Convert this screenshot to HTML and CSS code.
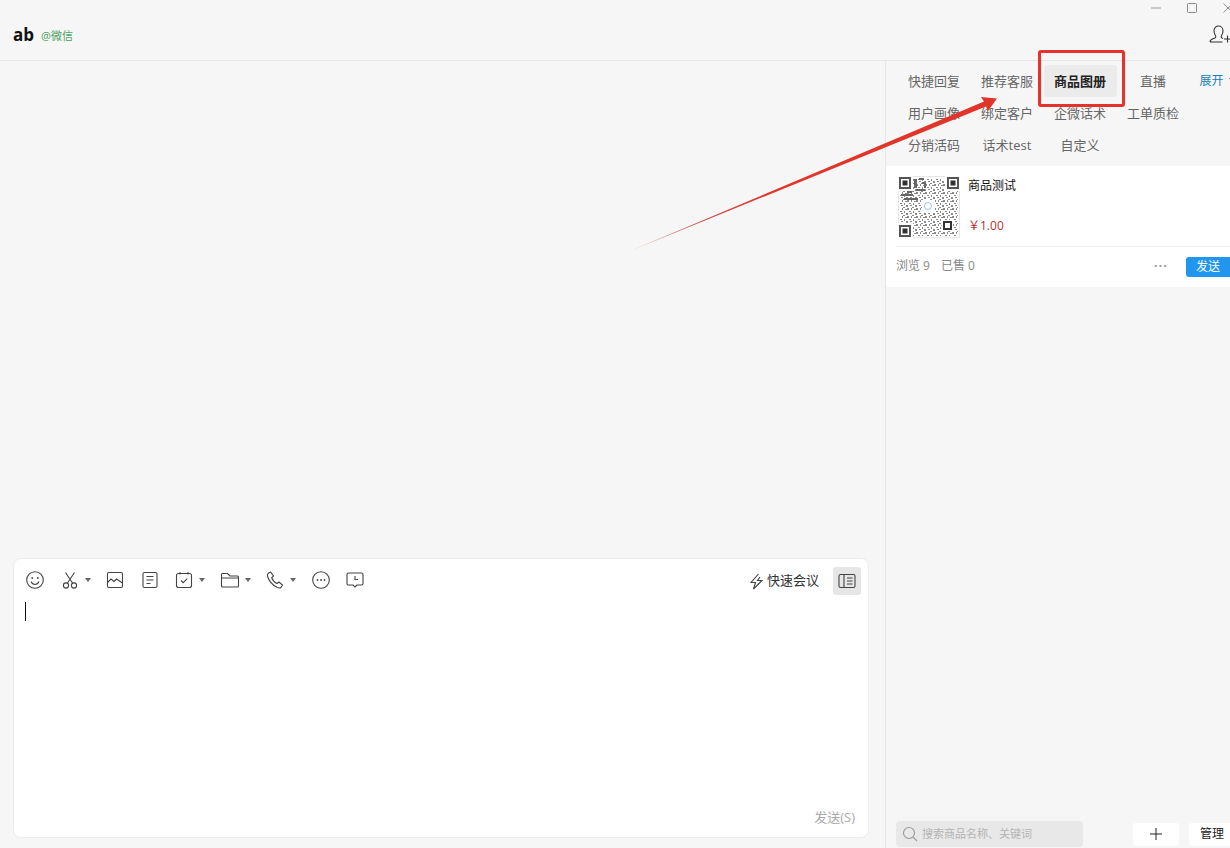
FILE: index.html
```html
<!DOCTYPE html>
<html lang="zh-CN">
<head>
    <meta charset="UTF-8">
    <meta name="viewport" content="width=device-width, initial-scale=1.0">
    <title>商品图册</title>
    <link rel="stylesheet" href="styles.css">
</head>
<body>
    <div class="app">
        <header class="top-bar">
            <div class="contact">
                <span class="contact-name">ab</span>
                <span class="contact-source">@微信</span>
            </div>
            <div class="top-right">
                <div class="window-controls">
                    <span class="win-btn"><svg width="12" height="12" viewBox="0 0 12 12"><path d="M1 6h10" stroke="#999" fill="none"/></svg></span>
                    <span class="win-btn"><svg width="12" height="12" viewBox="0 0 12 12"><rect x="1.5" y="1.5" width="9" height="9" rx="1" stroke="#888" fill="none"/></svg></span>
                    <span class="win-btn"><svg width="12" height="12" viewBox="0 0 12 12"><path d="M1.5 1.5l9 9M10.5 1.5l-9 9" stroke="#888" fill="none"/></svg></span>
                </div>
                <svg class="add-contact" width="22" height="20" viewBox="0 0 22 20"><path d="M1 17c0-2.500 3-3 5-4 1-.6 1-2 .2-3C5.200 9 5 7 5 5.500 5 3 7 1 9.500 1S14 3 14 5.500c0 1.500-.2 3.500-1.200 4.500-.8 1-.8 2.400.2 3l1 .5M1 17h12.500M15 14h7M18.500 10.500v7" stroke="#333" stroke-width="1.100" fill="none"/></svg>
            </div>
        </header>

        <div class="content">
            <main class="chat">
                <div class="messages"></div>
                <section class="editor">
                    <div class="toolbar">
                        <div class="tools">
                            <span class="tool"><svg width="20" height="20" viewBox="0 0 20 20" class="icon"><circle cx="10" cy="10" r="8.300"/><circle cx="7.200" cy="8" r=".9" class="solid"/><circle cx="12.800" cy="8" r=".9" class="solid"/><path d="M6 11.500c1 2.200 2.500 3 4 3s3-.8 4-3"/></svg></span>
                            <span class="tool"><svg width="20" height="20" viewBox="0 0 20 20" class="icon"><circle cx="6" cy="15.500" r="2.600"/><circle cx="14" cy="15.500" r="2.600"/><path d="M7.300 13.200L14.500 2.500M12.700 13.200L5.500 2.500"/></svg><i class="caret"></i></span>
                            <span class="tool"><svg width="20" height="20" viewBox="0 0 20 20" class="icon"><rect x="2.500" y="2.500" width="15" height="15" rx="1.500"/><path d="M2.500 12.500l3.500-3.500 3 2.500 2.500-2.500 6 4"/></svg></span>
                            <span class="tool"><svg width="20" height="20" viewBox="0 0 20 20" class="icon"><rect x="3" y="2.500" width="14" height="15" rx="1.500"/><path d="M6.500 6.500h7M6.500 10h7M6.500 13.500h4"/></svg></span>
                            <span class="tool"><svg width="20" height="20" viewBox="0 0 20 20" class="icon"><rect x="2.500" y="3.500" width="15" height="14" rx="2"/><path d="M6 2v2.500M14 2v2.500M7 10.500l2.200 2.200 4-4"/></svg><i class="caret"></i></span>
                            <span class="tool"><svg width="20" height="20" viewBox="0 0 20 20" class="icon"><path d="M1.500 6V4.500C1.500 4 1.900 3.500 2.500 3.500h5L10 6h7.500c.6 0 1 .4 1 1v9c0 .6-.4 1-1 1h-15c-.6 0-1-.4-1-1zM1.500 8h17"/></svg><i class="caret"></i></span>
                            <span class="tool"><svg width="20" height="20" viewBox="0 0 20 20" class="icon"><path d="M3 3.500L5.500 2l3 4-1.800 1.700c.8 2.300 2.800 4.600 5.300 5.800L14 12l3.500 3-1.500 2.500c-1 .8-2.500.5-4-.2C7.500 15 4 11 2.600 6.500 2.300 5.300 2.400 4.200 3 3.500z"/></svg><i class="caret"></i></span>
                            <span class="tool"><svg width="20" height="20" viewBox="0 0 20 20" class="icon"><circle cx="10" cy="10" r="8.300"/><circle cx="6.500" cy="10" r=".9" class="solid"/><circle cx="10" cy="10" r=".9" class="solid"/><circle cx="13.500" cy="10" r=".9" class="solid"/></svg></span>
                            <span class="tool"><svg width="20" height="20" viewBox="0 0 20 20" class="icon"><path d="M3.500 3h13c.8 0 1.500.7 1.500 1.500v9c0 .8-.7 1.500-1.500 1.500h-4.500L10 17l-2-2H3.500C2.700 15 2 14.300 2 13.500v-9C2 3.700 2.700 3 3.500 3zM10 6v3.500h3"/></svg></span>
                        </div>
                        <div class="toolbar-right">
                            <span class="quick-meeting">
                                <svg width="15" height="17" viewBox="0 0 15 17" class="icon"><path d="M9.500 1L2 9.500h4.500L4.500 16l8.500-8.500H8.500L11 4"/></svg>
                                <span class="quick-label">快速会议</span>
                            </span>
                            <span class="panel-toggle"><svg width="18" height="16" viewBox="0 0 18 16" class="icon"><rect x="1" y="1.500" width="16" height="13" rx="1.500"/><path d="M6 1.500v13M9 5h5.500M9 8h5.500M9 11h5.500"/></svg></span>
                        </div>
                    </div>
                    <div class="input-area"><span class="text-cursor"></span></div>
                    <div class="editor-footer">发送(S)</div>
                </section>
            </main>

            <aside class="side">
                <nav class="tabs">
                    <a class="tab">快捷回复</a>
                    <a class="tab">推荐客服</a>
                    <a class="tab active">商品图册</a>
                    <a class="tab">直播</a>
                    <a class="tab expand">展开<svg class="expand-mark" width="8" height="6" viewBox="0 0 8 6"><path d="M1 1l3 3 3-3" stroke="#1a7fb5" fill="none"/></svg></a>
                    <a class="tab">用户画像</a>
                    <a class="tab">绑定客户</a>
                    <a class="tab">企微话术</a>
                    <a class="tab">工单质检</a>
                    <span></span>
                    <a class="tab">分销活码</a>
                    <a class="tab">话术test</a>
                    <a class="tab">自定义</a>
                </nav>

                <div class="product-card">
                    <div class="product-main">
                        <svg class="qr" width="62" height="62" viewBox="0 0 62 62">
                            <defs>
                                <pattern id="qrDots" width="9" height="8" patternUnits="userSpaceOnUse">
                                    <path d="M0 0h2v2H0zM4 0h1v2H4zM7 1h2v1H7zM2 3h2v1H2zM6 3h1v2H6zM0 5h1v2H0zM3 5h2v1H3zM8 5h1v2H8zM5 7h2v1H5z" fill="#8a8a8a"/>
                                </pattern>
                            </defs>
                            <rect x=".5" y=".5" width="61" height="61" fill="#fff" stroke="#e6e6e6"/>
                            <rect x="2" y="2" width="58" height="58" fill="url(#qrDots)"/>
                            <!-- finder squares -->
                            <rect x="0" y="0" width="15" height="15" fill="#fff"/>
                            <rect x="47" y="0" width="15" height="15" fill="#fff"/>
                            <rect x="0" y="47" width="15" height="15" fill="#fff"/>
                            <rect x="2" y="2" width="10" height="10" fill="none" stroke="#555" stroke-width="2"/>
                            <rect x="4.500" y="4.500" width="5" height="5" fill="#333"/>
                            <rect x="50" y="2" width="10" height="10" fill="none" stroke="#555" stroke-width="2"/>
                            <rect x="52.500" y="4.500" width="5" height="5" fill="#333"/>
                            <rect x="2" y="50" width="10" height="10" fill="none" stroke="#555" stroke-width="2"/>
                            <rect x="4.500" y="52.500" width="5" height="5" fill="#333"/>
                            <rect x="44" y="44" width="11" height="11" fill="#fff"/>
                            <rect x="46" y="46" width="7" height="7" fill="none" stroke="#333" stroke-width="2"/>
                            <!-- denser block near the top left -->
                            <path d="M16 3h3v9h-3zM21 2h5v2h-5zM24 6h4v6h-2V8h-2zM18 13h9v2h-9zM3 18h12v2H3zM6 22h14v2H6zM9 15h5v2H9z" fill="#666"/>
                            <rect x="24" y="24" width="13" height="13" fill="#fff"/>
                            <circle cx="30" cy="30" r="3.500" fill="none" stroke="#9cc9d8"/>
                        </svg>
                        <div class="product-info">
                            <div class="product-name">商品测试</div>
                            <div class="product-price">￥1.00</div>
                        </div>
                    </div>
                    <div class="product-foot">
                        <span class="stat">浏览 9</span>
                        <span class="stat">已售 0</span>
                        <span class="more">···</span>
                        <span class="send-btn">发送</span>
                    </div>
                </div>

                <div class="side-spacer"></div>

                <div class="side-bottom">
                    <div class="search">
                        <svg width="16" height="16" viewBox="0 0 16 16" class="icon"><circle cx="7" cy="7" r="5.500"/><path d="M11 11l4 4"/></svg>
                        <span class="search-text">搜索商品名称、关键词</span>
                    </div>
                    <span class="light-btn add-btn">
                        <svg width="12" height="12" viewBox="0 0 12 12"><path d="M6 0v12M0 6h12" stroke="#222" fill="none"/></svg>
                    </span>
                    <span class="light-btn manage-btn">管理</span>
                </div>
            </aside>
        </div>

        <!-- annotation drawn over the screenshot -->
        <svg class="arrow" width="1230" height="848" viewBox="0 0 1230 848">
            <defs>
                <linearGradient id="arrowFade" gradientUnits="userSpaceOnUse" x1="630" y1="251" x2="780" y2="190">
                    <stop offset="0" stop-color="#dc9c94"/>
                    <stop offset=".5" stop-color="#cf4a40"/>
                    <stop offset="1" stop-color="#e2352a"/>
                </linearGradient>
            </defs>
            <polygon points="630,251 984,101.500 981,97 997,98.500 988,111 986,106.500" fill="url(#arrowFade)"/>
        </svg>
        <div class="highlight-box"></div>
    </div>
</body>
</html>
```

FILE: styles.css
```css
* {
    box-sizing: border-box;
}
body {
    margin: 0;
    font-family: "Open Sans", "Noto Sans CJK SC", sans-serif;
    background-color: #f6f6f6;
    color: #222;
}
.app {
    position: relative;
    display: flex;
    flex-direction: column;
    width: 1230px;
    height: 848px;
    overflow: hidden;
}
.top-bar {
    display: flex;
    justify-content: space-between;
    flex: 0 0 61px;
    border-bottom: 1px solid #e6e6e6;
}
.contact {
    display: flex;
    align-items: center;
    gap: 7px;
    padding-left: 13px;
    padding-top: 8px;
}
.contact-name {
    font-size: 17px;
    font-weight: 700;
    color: #111;
}
.contact-source {
    font-size: 11px;
    color: #4a9e5c;
    padding-top: 2px;
}
.top-right {
    display: flex;
    flex-direction: column;
    align-items: flex-end;
}
.window-controls {
    display: flex;
    height: 25px;
    margin-right: -16px;
}
.win-btn {
    display: flex;
    justify-content: center;
    align-items: flex-start;
    width: 36px;
    padding-top: 2px;
}
.add-contact {
    margin-right: -1px;
}
.content {
    display: flex;
    flex: 1;
    min-height: 0;
}
.chat {
    display: flex;
    flex-direction: column;
    flex: 0 0 885px;
    padding: 0 16px 10px 13px;
}
.messages {
    flex: 1;
}
.editor {
    display: flex;
    flex-direction: column;
    height: 280px;
    background-color: #fff;
    border: 1px solid #ececec;
    border-radius: 8px;
}
.toolbar {
    display: flex;
    justify-content: space-between;
    align-items: center;
    padding: 8px 7px 0 11px;
}
.tools {
    display: flex;
    align-items: center;
    gap: 14.5px;
    margin-bottom: 2px;
}
.tool {
    display: flex;
    align-items: center;
}
.icon {
    fill: none;
    stroke: #444;
    stroke-width: 1.1;
}
.icon .solid {
    fill: #444;
    stroke: none;
}
.caret {
    width: 0;
    height: 0;
    margin-left: 5px;
    border-left: 3px solid transparent;
    border-right: 3px solid transparent;
    border-top: 4px solid #666;
}
.toolbar-right {
    display: flex;
    align-items: center;
    gap: 14px;
}
.quick-meeting {
    display: flex;
    align-items: center;
    gap: 3px;
    font-size: 13px;
    color: #333;
}
.quick-label {
    padding-bottom: 3px;
}
.panel-toggle {
    display: flex;
    justify-content: center;
    align-items: center;
    width: 28px;
    height: 28px;
    background-color: #e6e6e6;
    border-radius: 3px;
}
.input-area {
    flex: 1;
    padding: 7px 0 0 11px;
}
.text-cursor {
    display: block;
    width: 1px;
    height: 19px;
    background-color: #111;
}
.editor-footer {
    padding: 0 13px 11px 0;
    text-align: right;
    font-size: 13px;
    color: #aaa;
}
.side {
    display: flex;
    flex-direction: column;
    flex: 0 0 345px;
    min-width: 0;
    border-left: 1px solid #e6e6e6;
}
.tabs {
    display: grid;
    grid-template-columns: repeat(4, 73px) 40px;
    grid-auto-rows: 32px;
    padding: 4px 0 5px 11.5px;
    flex: 0 0 105px;
}
.tab {
    display: flex;
    justify-content: center;
    align-items: center;
    padding-bottom: 2px;
    font-size: 13px;
    color: #666;
    white-space: nowrap;
}
.tab.active {
    font-weight: 700;
    color: #222;
    background-color: #ebebeb;
    border-radius: 3px;
}
.tab.expand {
    justify-content: flex-start;
    padding-left: 10px;
    font-size: 12px;
    color: #1a7fb5;
}
.expand-mark {
    flex: none;
    margin-left: 4px;
}
.product-card {
    background-color: #fff;
}
.product-main {
    display: flex;
    padding: 10px 0 8px 12px;
}
.qr {
    flex: none;
}
.product-info {
    display: flex;
    flex-direction: column;
    justify-content: space-between;
    padding-left: 8px;
}
.product-name {
    font-size: 12px;
    color: #111;
    line-height: 20px;
}
.product-price {
    font-size: 12px;
    color: #b5322f;
    line-height: 18px;
    margin-bottom: 3px;
}
.product-foot {
    display: flex;
    align-items: center;
    height: 41px;
    margin-left: 10px;
    border-top: 1px solid #f2f2f2;
    font-size: 12px;
    color: #888;
    gap: 11px;
}
.stat {
    padding-bottom: 4px;
}
.more {
    margin-left: auto;
    margin-right: 7px;
    padding-bottom: 4px;
    font-size: 13px;
    font-weight: 700;
    letter-spacing: 1px;
    color: #999;
}
.send-btn {
    width: 44px;
    height: 20px;
    margin-bottom: 1px;
    line-height: 19px;
    text-align: center;
    color: #fff;
    background-color: #2196ee;
    border-radius: 3px 0 0 3px;
}
.side-spacer {
    flex: 1;
}
.side-bottom {
    display: flex;
    align-items: center;
    padding: 0 0 1px 10px;
}
.search {
    display: flex;
    align-items: center;
    gap: 4px;
    flex: none;
    width: 187px;
    height: 26px;
    padding-left: 6px;
    background-color: #e8e8e8;
    border-radius: 4px;
    font-size: 11px;
    color: #b4b4b4;
}
.search-text {
    padding-bottom: 2px;
}
.search .icon {
    stroke: #999;
}
.light-btn {
    display: flex;
    justify-content: center;
    align-items: center;
    height: 23px;
    background-color: #fff;
    border-radius: 3px;
    font-size: 12px;
    color: #222;
}
.add-btn {
    flex: none;
    width: 46px;
    margin-left: 50px;
}
.manage-btn {
    flex: none;
    width: 46px;
    margin-left: 10px;
    padding-bottom: 2px;
}
.arrow {
    position: absolute;
    left: 0;
    top: 0;
    pointer-events: none;
}
.highlight-box {
    position: absolute;
    left: 1038px;
    top: 50px;
    width: 87px;
    height: 57px;
    border: 3px solid #e6322a;
    border-radius: 3px;
}
```
